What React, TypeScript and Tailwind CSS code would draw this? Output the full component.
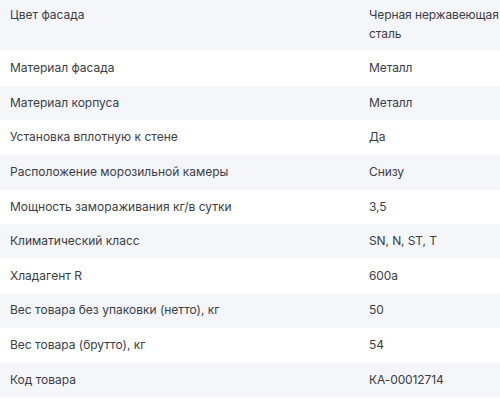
import React from 'react';

const specs: [string, string][] = [
  ['Цвет фасада', 'Черная нержавеющая\nсталь'],
  ['Материал фасада', 'Металл'],
  ['Материал корпуса', 'Металл'],
  ['Установка вплотную к стене', 'Да'],
  ['Расположение морозильной камеры', 'Снизу'],
  ['Мощность замораживания кг/в сутки', '3,5'],
  ['Климатический класс', 'SN, N, ST, T'],
  ['Хладагент R', '600a'],
  ['Вес товара без упаковки (нетто), кг', '50'],
  ['Вес товара (брутто), кг', '54'],
  ['Код товара', 'КА-00012714'],
];

export default function App() {
  return (
    <div className="w-[500px] h-[401px] overflow-hidden bg-white font-['Inter',sans-serif] text-[12px] leading-[18.6px] text-[#3b3d48]">
      {/* Characteristics table */}
      <div className="-mt-[2px]">
        {specs.map(([label, value], i) => (
          <div
            key={label}
            className={`flex py-2 ${i % 2 === 0 ? 'bg-[#f5f6fa]' : 'bg-white'}`}
          >
            <div className="w-[359px] shrink-0 pl-[10px] pr-4">{label}</div>
            <div className="flex-1 min-w-0 pl-[10px] whitespace-pre tracking-[-0.1px]">{value}</div>
          </div>
        ))}
      </div>
    </div>
  );
}
